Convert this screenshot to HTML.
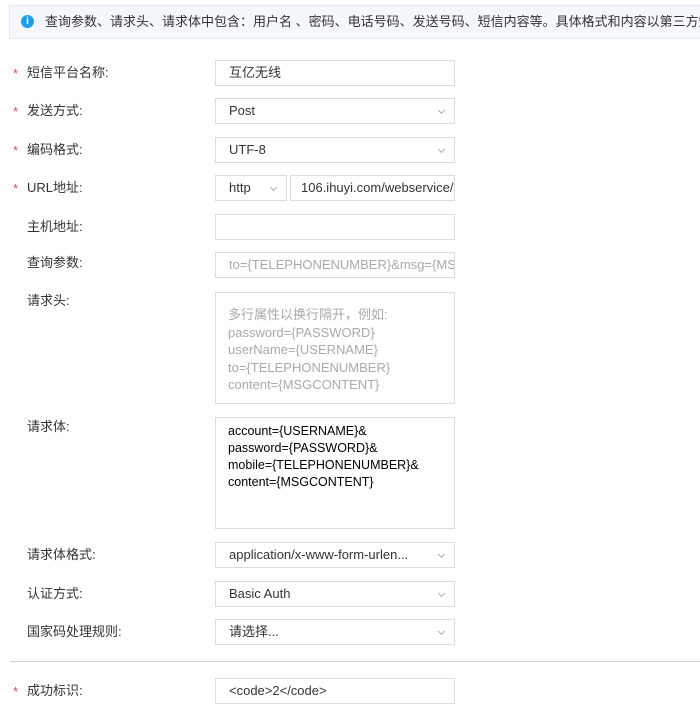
<!DOCTYPE html>
<html><head><meta charset="utf-8"><style>
*{margin:0;padding:0;box-sizing:border-box}
body{width:700px;height:713px;overflow:hidden;background:#fff;font-family:"Liberation Sans","Noto Sans CJK SC",sans-serif;font-size:13px;color:#333;position:relative}
.a{position:absolute}
.info{left:9px;top:5px;width:700px;height:34px;background:#f4f8fc;border:1px solid #e3e9ef;white-space:nowrap;overflow:hidden;padding-left:35px;line-height:32px;font-size:13px;color:#333}
.ic{left:11px;top:9px;width:13px;height:13px;border-radius:50%;background:#1e9fe6;color:#fff;font-size:10px;font-weight:bold;line-height:13px;text-align:center}
.lb{left:27px;font-size:13px;color:#333;line-height:16px}
.st{left:13px;color:#e84a4a;font-size:13px;line-height:16px}
.in{border:1px solid #dcdcdc;background:#fff;height:26px;line-height:24px;padding-left:13px;font-size:13px;color:#333;white-space:nowrap;overflow:hidden}
.sel:after{content:"";position:absolute;right:10px;top:9px;width:4px;height:4px;border-right:1px solid #aaa;border-bottom:1px solid #aaa;transform:rotate(45deg)}
.ph{color:#aaa}
.ta{border:1px solid #dcdcdc;padding:12px 12px;line-height:17.5px;font-size:13px}
</style></head><body>
<div class="a info"><div class="a ic">i</div>查询参数、请求头、请求体中包含：用户名 、密码、电话号码、发送号码、短信内容等。具体格式和内容以第三方短信平台为准</div>

<div class="a st" style="top:66px">*</div><div class="a lb" style="top:65px">短信平台名称:</div>
<div class="a in" style="left:215px;top:60px;width:240px">互亿无线</div>

<div class="a st" style="top:104px">*</div><div class="a lb" style="top:103px">发送方式:</div>
<div class="a in sel" style="left:215px;top:98px;width:240px">Post</div>

<div class="a st" style="top:143px">*</div><div class="a lb" style="top:142px">编码格式:</div>
<div class="a in sel" style="left:215px;top:137px;width:240px">UTF-8</div>

<div class="a st" style="top:181px">*</div><div class="a lb" style="top:180px">URL地址:</div>
<div class="a in sel" style="left:215px;top:175px;width:72px">http</div>
<div class="a in" style="left:290px;top:175px;width:165px;padding-left:10px">106.ihuyi.com/webservice/sms.php</div>

<div class="a lb" style="top:219px">主机地址:</div>
<div class="a in" style="left:215px;top:214px;width:240px"></div>

<div class="a lb" style="top:255px">查询参数:</div>
<div class="a in ph" style="left:215px;top:252px;width:240px">to={TELEPHONENUMBER}&amp;msg={MSGCONTENT}</div>

<div class="a lb" style="top:293px">请求头:</div>
<div class="a ta ph" style="left:215px;top:292px;width:240px;height:112px;padding-top:13px">多行属性以换行隔开，例如:<br>password={PASSWORD}<br>userName={USERNAME}<br>to={TELEPHONENUMBER}<br>content={MSGCONTENT}</div>

<div class="a lb" style="top:419px">请求体:</div>
<div class="a ta" style="left:215px;top:417px;width:240px;height:112px;padding-top:5px;color:#000;font-size:12.5px;line-height:17px">account={USERNAME}&amp;<br>password={PASSWORD}&amp;<br>mobile={TELEPHONENUMBER}&amp;<br>content={MSGCONTENT}</div>

<div class="a lb" style="top:547px">请求体格式:</div>
<div class="a in sel" style="left:215px;top:542px;width:240px">application/x-www-form-urlen...</div>

<div class="a lb" style="top:586px">认证方式:</div>
<div class="a in sel" style="left:215px;top:581px;width:240px">Basic Auth</div>

<div class="a lb" style="top:624px">国家码处理规则:</div>
<div class="a in sel" style="left:215px;top:619px;width:240px">请选择...</div>

<div class="a" style="left:10px;top:661px;width:690px;height:1px;background:#d5d5d5"></div>

<div class="a st" style="top:684px">*</div><div class="a lb" style="top:683px">成功标识:</div>
<div class="a in" style="left:215px;top:678px;width:240px">&lt;code&gt;2&lt;/code&gt;</div>
</body></html>
